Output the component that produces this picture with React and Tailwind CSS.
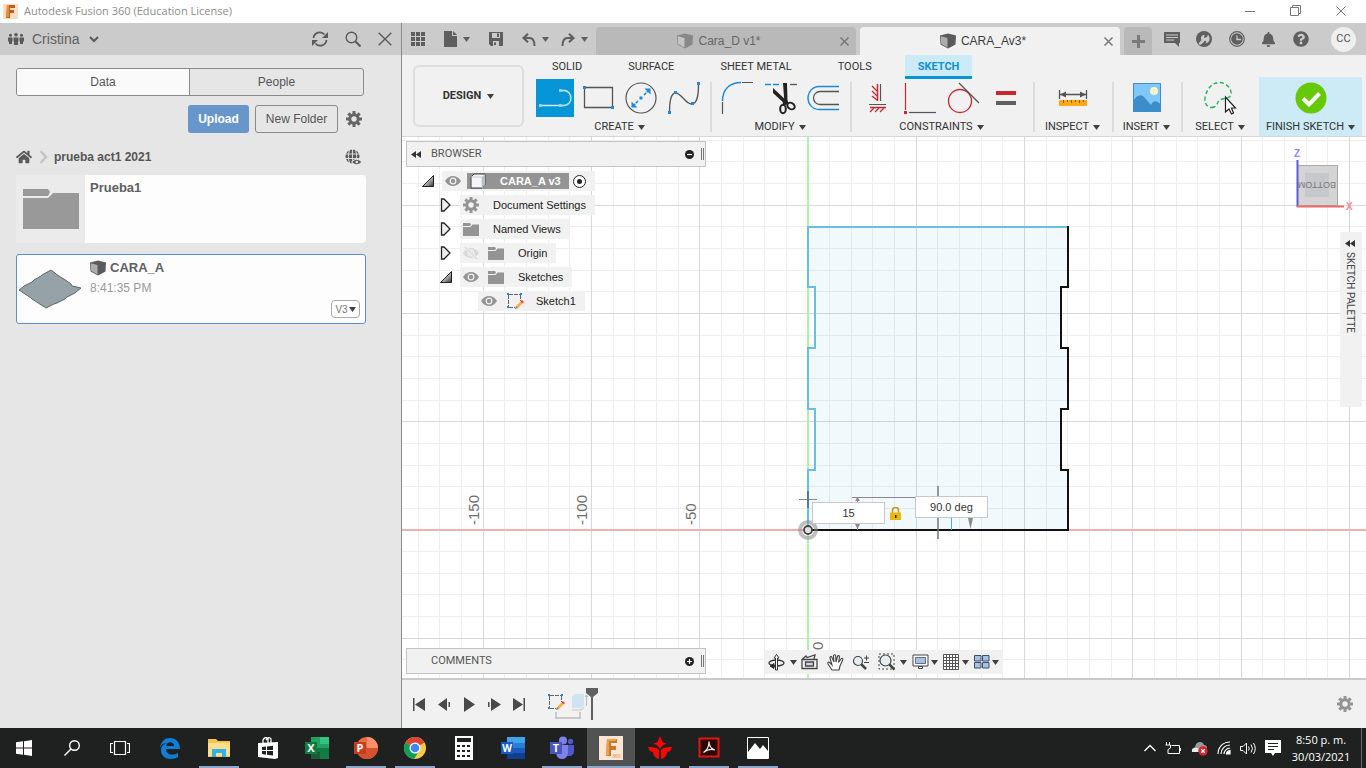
import { FaBell, FaQuestionCircle, FaHome } from 'react-icons/fa';

const BLUE = '#1a8ae0';

/* ---------- shared icons ---------- */

const Caret = ({ className = 'text-[#404040]' }) => (
  <svg width="7" height="5" viewBox="0 0 7 5" className={`shrink-0 ${className}`}>
    <path d="M0 0h7L3.5 5z" fill="currentColor" />
  </svg>
);

const Gear = ({ size = 16, className = 'text-[#666]' }) => (
  <svg width={size} height={size} viewBox="0 0 16 16" className={className}>
    <circle cx="8" cy="8" r="4.2" fill="none" stroke="currentColor" strokeWidth="3" />
    <g fill="currentColor">
      {[0, 45, 90, 135, 180, 225, 270, 315].map((a) => (
        <rect key={a} x="6.5" y="0" width="3" height="4" transform={`rotate(${a} 8 8)`} />
      ))}
    </g>
  </svg>
);

const Cube = ({ className = 'text-[#5a5a5a]' }) => (
  <svg width="16" height="16" viewBox="0 0 16 16" className={className}>
    <path d="M0 2.5 8 .5l8 2-.5 9L8 15.5l-7.5-4z" fill="currentColor" />
    <path d="M.8 3.2 7.5 5v9.5L1.2 11z" fill="#fff" fillOpacity=".5" />
  </svg>
);

const Close = ({ size = 10, className = 'text-[#777]', width = 1.6 }) => (
  <svg width={size} height={size} viewBox="0 0 10 10" className={className}>
    <path d="M.5.5l9 9M9.5.5l-9 9" stroke="currentColor" strokeWidth={width} />
  </svg>
);

const Eye = ({ off }) => (
  <svg width="16" height="12" viewBox="0 0 16 12" className={off ? 'text-[#d8d8d8]' : 'text-[#949494]'}>
    <path d="M0 6C2 2.500 5 1 8 1s6 1.500 8 5c-2 3.500-5 5-8 5S2 9.500 0 6z" fill="currentColor" />
    <circle cx="8" cy="6" r="2.800" fill="none" stroke="#f1f1f1" strokeWidth="1.200" />
    {off && <path d="M2 0l12 12" stroke="#f1f1f1" strokeWidth="3" />}
    {off && <path d="M2 0l12 12" stroke="#d8d8d8" strokeWidth="1.200" />}
  </svg>
);

const Folder = () => (
  <svg width="16" height="13" viewBox="0 0 16 13">
    <path d="M0 0h7l1 1.500L7 3H0z" fill="#949494" />
    <path d="M0 4h7.500L9.500 1.500H16V13H0z" fill="#949494" />
  </svg>
);

const SketchIcon = () => (
  <svg width="18" height="16" viewBox="0 0 18 16">
    <path d="M2.500 2v11M3 1.500h11M14.500 2v6M3 14.500h6" fill="none" stroke="#666" strokeDasharray="4 1" />
    <path d="M1 0h2v2H1zM14 0h2v2h-2zM1 13h2v2H1z" fill={BLUE} />
    <path d="M10 13l4.500-4.500 2 2L12 15z" fill="#fbb03b" />
    <path d="M14.500 8.500L16 7l2 2-1.500 1.500z" fill="#f0404a" />
    <path d="M10 13l2 2-3 1z" fill="#777" />
  </svg>
);

const BodyIcon = () => (
  <svg width="16" height="16" viewBox="0 0 16 16">
    <path d="M1 4l3-3h11v11l-3 3H1z" fill="#f4f5f8" stroke="#444" />
    <path d="M1 4h11v11" fill="none" stroke="#ccc" />
    <path d="M12 4l3-3v11l-3 3z" fill="#b9bdc6" />
  </svg>
);

const Expander = ({ open }) => (
  <svg width="12" height="14" viewBox="0 0 12 14" className="shrink-0">
    <defs>
      <linearGradient id="tri" x1="0" y1="0" x2="1" y2="1">
        <stop offset=".3" stopColor="#eee" />
        <stop offset="1" stopColor="#333" />
      </linearGradient>
    </defs>
    {open ? (
      <path d="M11.500 1.500v11H.500z" fill="url(#tri)" stroke="#222" />
    ) : (
      <path d="M1.500 1h2.500l6 6-6 6H1.500z" fill="#eee" stroke="#222" strokeWidth="1.300" />
    )}
  </svg>
);

const Rewind = () => (
  <svg width="10" height="7" viewBox="0 0 10 7">
    <path d="M5 0v7L0 3.500zM10 0v7L5 3.500z" fill="#333" />
  </svg>
);

/* ---------- data panel ---------- */

function DataPanel() {
  return (
    <aside className="w-[402px] shrink-0 border-r border-[#8a8a8a] bg-[#e6e6e6] text-[#555]">
      <header className="flex h-8 items-center bg-[#cbcbcb] pl-2 pr-[9px]">
        <button className="flex items-center gap-2 text-sm text-[#606060]">
          <svg width="16" height="12" viewBox="0 0 16 12" fill="#5a5a5a">
            <circle cx="8" cy="1.800" r="1.800" />
            <circle cx="2.500" cy="2.300" r="1.500" />
            <circle cx="13.500" cy="2.300" r="1.500" />
            <path d="M5.500 4.500h5v4H10V12H6V8.500h-.5zM0 4.500h4.500v4H4V11H1V8.500H0zM11.500 4.500H16v4h-1V11h-3V8.500h-.5z" />
          </svg>
          Cristina
          <svg width="10" height="7" viewBox="0 0 10 7" className="ml-[2px]">
            <path d="M1 1l4 4 4-4" fill="none" stroke="#5a5a5a" strokeWidth="2" />
          </svg>
        </button>
        <div className="ml-auto flex items-center gap-[17px]">
          <button aria-label="Refresh">
            <svg width="16" height="16" viewBox="0 0 16 16" fill="none" stroke="#5a5a5a" strokeWidth="1.800">
              <path d="M1.500 7A6.300 6.300 0 0 1 12.500 3.500M14.500 9A6.300 6.300 0 0 1 3.500 12.500" />
              <path d="M16 1v6h-6zM0 15V9h6z" fill="#5a5a5a" stroke="none" />
            </svg>
          </button>
          <button aria-label="Search">
            <svg width="16" height="16" viewBox="0 0 16 16" fill="none" stroke="#5a5a5a" strokeWidth="1.400">
              <circle cx="6.500" cy="6.500" r="5.300" />
              <path d="M10.500 10.500l5 5" strokeWidth="2" />
            </svg>
          </button>
          <button aria-label="Close panel">
            <Close size={14} className="text-[#5a5a5a]" width={1} />
          </button>
        </div>
      </header>

      <div className="px-4 pr-[35px] pt-[13px]">
        <div className="mr-[2px] grid h-7 grid-cols-2 overflow-hidden rounded-[3px] border border-[#8a8a8a] text-xs">
          <button className="border-r border-[#8a8a8a] bg-[#fafafa]">Data</button>
          <button>People</button>
        </div>

        <div className="mr-1 mt-[9px] flex items-center justify-end gap-[6px] text-xs">
          <button className="h-7 w-[61px] rounded-[3px] bg-[#6896ca] font-bold text-white">Upload</button>
          <button className="h-7 w-[83px] rounded-[3px] border border-[#8a8a8a]">New Folder</button>
          <button aria-label="Settings" className="ml-[2px]">
            <Gear />
          </button>
        </div>

        <nav className="mr-1 mt-3 flex h-6 items-center text-xs font-bold">
          <a href="#home" aria-label="Home" className="text-[#5a5a5a]">
            <FaHome size={16} />
          </a>
          <svg width="9" height="14" viewBox="0 0 9 14" className="ml-[7px] mr-[6px]">
            <path d="M1.500 1l5.500 6-5.500 6" fill="none" stroke="#c4c4c4" strokeWidth="2.500" />
          </svg>
          <a href="#project">prueba act1 2021</a>
          <button aria-label="Share" className="ml-auto">
            <svg width="17" height="17" viewBox="0 0 17 17">
              <circle cx="7.500" cy="7.500" r="7" fill="#5a5a5a" />
              <path d="M0 5h15M0 9.500h15M7.500 0v15M4.500 1C3 5 3 10 4.500 14M10.500 1c1.500 4 1.500 9 0 13" fill="none" stroke="#e6e6e6" strokeWidth=".9" />
              <path d="M6.500 13q5-5.500 10.500 0-5.500 5.500-10.500 0z" fill="#5a5a5a" stroke="#e6e6e6" />
              <circle cx="11.800" cy="13" r="1.300" fill="#e6e6e6" />
            </svg>
          </button>
        </nav>

        <article className="mt-[6px] flex h-[68px] rounded-sm bg-[#fdfdfd]">
          <div className="flex w-[69px] items-center justify-center bg-[#ebebeb]">
            <svg width="56" height="42" viewBox="0 0 56 42" fill="#999">
              <path d="M0 1h25l2 3-2 4H0zM0 10h25l5-5h26v36H0z" />
            </svg>
          </div>
          <h3 className="pl-[5px] pt-[3px] text-[13px] leading-5 font-bold text-[#606060]">Prueba1</h3>
        </article>

        <article className="mt-[11px] flex h-[70px] rounded-[3px] border border-[#5b8fce] bg-[#fdfdfd]">
          <svg width="66" height="68" viewBox="0 0 66 68" className="mr-[7px]">
            <path d="M2 35l4-3 1-1 8-4 2-2 7-4 1-1 9-5 4 3 1 1 6 4 2 1 7 5 1 2 9 2-5 4-1 1-8 4-2 2-8 4-3 1-8 4-14-9-1-1z" fill="#97a2a8" stroke="#5c686d" />
          </svg>
          <div className="flex-1 leading-5">
            <h3 className="flex items-center gap-1 pt-[3px] text-[13px] font-bold text-[#606060]">
              <Cube /> CARA_A
            </h3>
            <p className="text-xs leading-5 text-[#999]">8:41:35 PM</p>
          </div>
          <button className="mb-[5px] mr-[5px] flex h-[18px] w-[29px] items-center justify-center gap-[1px] self-end rounded-sm border border-[#aaa] text-[10px] text-[#777]">
            V3 <Caret />
          </button>
        </article>
      </div>
    </aside>
  );
}

/* ---------- application bar ---------- */

function DocumentTab({ title, active }) {
  return (
    <div
      className={`relative flex h-7 flex-1 items-center justify-center gap-[5px] rounded-t-sm pr-[14px] text-xs ${
        active ? 'bg-[#f1f1f1] text-[#3c3c3c]' : 'bg-[#b9b9b9] text-[#666]'
      }`}
    >
      <Cube className={active ? 'text-[#5a5a5a]' : 'text-[#888]'} />
      <span>{title}</span>
      <button aria-label={`Close ${title}`} className="absolute right-[7px]">
        <Close size={9} />
      </button>
    </div>
  );
}

function AppBar() {
  return (
    <div className="flex h-8 items-center bg-[#cbcbcb] text-[#5f5f5f]">
      <div className="flex w-[194px] shrink-0 items-center pl-[9px]">
        <button aria-label="Show data panel">
          <svg width="14" height="14" viewBox="0 0 14 14" fill="currentColor">
            {[0, 5, 10].map((y) => [0, 5, 10].map((x) => <rect key={`${x}-${y}`} x={x} y={y} width="4" height="4" />))}
          </svg>
        </button>
        <button aria-label="File" className="ml-[19px] flex items-center gap-[6px]">
          <svg width="13" height="16" viewBox="0 0 13 16" fill="currentColor">
            <path d="M0 0h8v5h5v11H0zM9 0l4 4H9z" />
          </svg>
          <Caret className="text-[#5f5f5f]" />
        </button>
        <button aria-label="Save" className="ml-[19px]">
          <svg width="14" height="14" viewBox="0 0 14 14">
            <path d="M0 0h14v14H2l-2-2z" fill="currentColor" />
            <path d="M3 1h8v5H3zM4 9h6v5H4z" fill="#cbcbcb" />
            <path d="M8 1.500h2V5H8zM5 10.500h2V13H5z" fill="currentColor" />
          </svg>
        </button>
        <button aria-label="Undo" className="ml-[19px] flex items-center gap-[6px]">
          <svg width="14" height="13" viewBox="0 0 14 13" fill="none" stroke="currentColor">
            <path d="M6 .8L1.500 5 6 9.200" strokeWidth="2.200" />
            <path d="M2 5h5.500c3.500 0 5 2.500 5 8" strokeWidth="2" />
          </svg>
          <Caret className="text-[#5f5f5f]" />
        </button>
        <button aria-label="Redo" className="ml-3 flex items-center gap-[6px]">
          <svg width="14" height="13" viewBox="0 0 14 13" fill="none" stroke="currentColor">
            <path d="M8 .8L12.500 5 8 9.200" strokeWidth="2.200" />
            <path d="M12 5H6.500c-3.500 0-5 2.500-5 8" strokeWidth="2" />
          </svg>
          <Caret className="text-[#5f5f5f]" />
        </button>
      </div>

      <div className="flex flex-1 gap-1 self-end">
        <DocumentTab title="Cara_D v1*" />
        <DocumentTab title="CARA_Av3*" active />
        <button aria-label="New tab" className="flex h-7 w-7 items-center justify-center rounded-t-sm bg-[#b9b9b9]">
          <svg width="13" height="13" viewBox="0 0 13 13">
            <path d="M5 0h3v5h5v3H8v5H5V8H0V5h5z" fill="#7a7a7a" />
          </svg>
        </button>
      </div>

      <div className="flex w-[214px] shrink-0 items-center justify-between pl-3 pr-[10px]">
        <button aria-label="Comments">
          <svg width="16" height="16" viewBox="0 0 16 16">
            <path d="M0 1h16v11h-1v4l-4-4H0z" fill="currentColor" />
            <path d="M2 4h12M2 6.500h12M2 9h8" stroke="#cbcbcb" />
          </svg>
        </button>
        <button aria-label="Extensions">
          <svg width="16" height="16" viewBox="0 0 16 16">
            <circle cx="8" cy="8" r="8" fill="currentColor" />
            <path d="M2.500 12.500L5.500 9C4 6 6 3.500 8.500 4L8 7l3-1 1-2.500c2.500 3 2 7-1 8.500-1.500.7-3 .5-4 0L4 14z" fill="#cbcbcb" />
            <path d="M6.500 12.500L9 9.500l1.500 1.500-2 2.500z" fill="currentColor" />
          </svg>
        </button>
        <button aria-label="Job status">
          <svg width="16" height="16" viewBox="0 0 16 16">
            <circle cx="8" cy="8" r="7.300" fill="none" stroke="currentColor" strokeWidth="1.200" />
            <circle cx="8" cy="8" r="5.800" fill="currentColor" />
            <path d="M8 4.500V8.500h4" fill="none" stroke="#cbcbcb" strokeWidth="1.300" />
          </svg>
        </button>
        <button aria-label="Notifications"><FaBell size={15} /></button>
        <button aria-label="Help"><FaQuestionCircle size={16} /></button>
        <button className="ml-[6px] h-[25px] w-[25px] rounded-full bg-[#efefef] font-[Roboto] text-[11px] text-[#555]">CC</button>
      </div>
    </div>
  );
}

/* ---------- ribbon ---------- */

const icons = {
  line: (
    <>
      <path d="M4 26.500h20M24 11.500h4a7 7.500 0 0 1 0 15h-2" fill="none" stroke="#d9ecf7" strokeWidth="1.300" />
      <path d="M3 25h3v3H3zM23 25h3v3h-3zM23 10h3v3h-3z" fill="#8fd0f5" />
    </>
  ),
  rect: (
    <>
      <path d="M5.500 8.500h28v20h-28z" fill="none" stroke="#555" strokeWidth="1.300" />
      <path d="M4 7h3v3H4zM32 27h3v3h-3z" fill={BLUE} />
    </>
  ),
  circle: (
    <>
      <circle cx="19" cy="19" r="15" fill="none" stroke="#555" strokeWidth="1.200" />
      <path d="M11 27l5-5M22 16l5-5" stroke={BLUE} strokeWidth="1.600" strokeDasharray="3 1" />
      <path d="M28.500 9.500v6l-6-6zM9.500 28.500v-6l6 6zM17.500 17.500h3v3h-3z" fill={BLUE} />
    </>
  ),
  spline: (
    <>
      <path d="M4.500 34c0-10 1-20 6-20 6 0 10 11 16 11 6 0 7-9 7-20" fill="none" stroke="#555" strokeWidth="1.300" />
      <path d="M3 32h3v3H3zM9 12h3v3H9zM26 23h3v3h-3zM32 3h3v3h-3z" fill={BLUE} />
    </>
  ),
  fillet: (
    <>
      <path d="M4.500 22C4.500 10 12 3.500 23 3.500" fill="none" stroke={BLUE} strokeWidth="1.400" />
      <path d="M4.500 23v12M24 3.500h11" stroke="#555" strokeWidth="1.200" />
    </>
  ),
  trim: (
    <>
      <path d="M4 5.500h16" stroke={BLUE} strokeWidth="1.300" strokeDasharray="6 2" />
      <path d="M29 5.500h7" stroke="#555" strokeWidth="1.300" />
      <path d="M22 4h4l.5 18-3 3z" fill="#222" />
      <path d="M12 9v5l13 12 2-3z" fill="#222" />
      <ellipse cx="22" cy="30" rx="2.800" ry="4.200" fill="none" stroke="#222" strokeWidth="2" />
      <ellipse cx="30" cy="27" rx="4" ry="3" fill="none" stroke="#222" strokeWidth="2" transform="rotate(35 30 27)" />
      <path d="M22 25l5-2" stroke="#222" strokeWidth="3" />
    </>
  ),
  offset: (
    <>
      <path d="M35 7.500H15a11 11.500 0 0 0 0 23h20" fill="none" stroke={BLUE} strokeWidth="1.400" />
      <path d="M35 12.500H16a6.500 6.500 0 0 0 0 13h19" fill="none" stroke="#555" strokeWidth="1.300" />
    </>
  ),
  fix: (
    <>
      <path d="M19.500 5v17M12 28.500h16" stroke="#c8272d" strokeWidth="1.500" />
      <path d="M22.500 5v17M11 25.500h17" stroke="#555" strokeWidth="1.200" />
      <path d="M14 7l5 5M14 12l5 5M14 17l5 4M12 33l4-4M17 33l4-4M22 33l4-4" stroke="#c8272d" strokeWidth="1.300" />
    </>
  ),
  perpendicular: (
    <>
      <path d="M4.500 4v27" stroke="#c8272d" strokeWidth="1.200" />
      <path d="M8 33.500h27" stroke="#555" strokeWidth="1.200" />
      <path d="M3 32h3v3H3z" fill="#c8272d" />
    </>
  ),
  tangent: (
    <>
      <circle cx="16" cy="22" r="11.500" fill="none" stroke="#c8272d" strokeWidth="1.300" />
      <path d="M15 4l20 20" stroke="#555" strokeWidth="1.300" />
    </>
  ),
  equal: (
    <>
      <path d="M9 12h20v4H9z" fill="#c8272d" />
      <path d="M9 22h20v4H9z" fill="#606060" />
    </>
  ),
  measure: (
    <>
      <path d="M5.500 11v9M32.500 11v9M6 15.500h26" stroke="#555" strokeWidth="1.300" />
      <path d="M6 15.500l6-3v6zM32 15.500l-6-3v6z" fill="#555" />
      <path d="M5 21h28v6H5z" fill="#fba919" />
      <path d="M9.500 21v3M13.500 21v2M17.500 21v3M21.500 21v2M25.500 21v3M29.500 21v2" stroke="#8a5a00" />
    </>
  ),
  image: (
    <>
      <path d="M5 4h28v29H5z" fill="#80c7fb" />
      <path d="M5 22c4-6 8-8 12-3l6 7c2-5 6-5 10 0v7H5z" fill="#3b8ecb" />
      <circle cx="26" cy="12" r="4" fill="#fdf3c4" />
      <path d="M5.500 4.500h27v28h-27z" fill="none" stroke="#3b8ecb" />
    </>
  ),
  select: (
    <>
      <path d="M13 28c-5 2-10-2-9-9C6 9 11 4 18 3.500c8 0 13 7 12 12-1 5-8 3-12 6-2 2-1 5-5 6.500z" fill="none" stroke="#2bb05a" strokeWidth="1.400" strokeDasharray="4 2.500" />
      <path d="M24.500 18v15l3.500-3 2.500 5 2-1-2-5h4z" fill="#fff" stroke="#222" strokeWidth="1.200" />
    </>
  ),
  check: (
    <>
      <circle cx="19" cy="19" r="15.500" fill="#66c905" />
      <path d="M11 19.500l6 6 10.500-11" fill="none" stroke="#fff" strokeWidth="4" />
    </>
  ),
};

const groups = [
  { label: 'CREATE', width: 'w-[173px] mr-1', tools: ['line', 'rect', 'circle', 'spline'] },
  { label: 'MODIFY', width: 'w-[140px]', tools: ['fillet', 'trim', 'offset'], divider: true },
  { label: 'CONSTRAINTS', width: 'w-[183px]', tools: ['fix', 'perpendicular', 'tangent', 'equal'], divider: true },
  { label: 'INSPECT', width: 'w-[79px]', tools: ['measure'], divider: true },
  { label: 'INSERT', width: 'w-[69px]', tools: ['image'], divider: true },
  { label: 'SELECT', width: 'w-[78px]', tools: ['select'], divider: true },
  { label: 'FINISH SKETCH', width: 'w-[103px]', tools: ['check'], finish: true },
];

function Ribbon() {
  return (
    <div className="flex h-[82px] border-b border-[#d6d6d6] bg-[#f1f1f1] pl-[11px] font-[Roboto] text-[11px] text-[#333]">
      <button className="mt-[10px] flex h-[62px] w-[111px] shrink-0 items-center justify-center gap-[6px] rounded-md border-2 border-[#dedede] font-bold">
        DESIGN <Caret />
      </button>
      <div className="ml-[9px] flex-1">
        <nav className="ml-[6px] flex h-6 gap-5">
          {['SOLID', 'SURFACE', 'SHEET METAL', 'TOOLS'].map((t) => (
            <button key={t} className="px-[13px]">{t}</button>
          ))}
          <button className="bg-[#cdeaf7] px-[13px] font-bold text-[#0b93d3] shadow-[inset_0_-3px_#0696d7]">SKETCH</button>
        </nav>
        <div className="flex">
          {groups.map((g) => (
            <div
              key={g.label}
              className={`relative flex h-[57px] shrink-0 flex-col items-center ${g.width} ${
                g.finish ? '-mt-[2px] h-[59px] bg-[#cdeaf7] pt-[2px]' : ''
              }`}
            >
              {g.divider && <span className="absolute left-0 top-[3px] h-[50px] w-[2px] bg-[#dcdcdc]" />}
              <div className="flex gap-[5px]">
                {g.tools.map((name) => (
                  <button key={name} aria-label={name} className={name === 'line' ? 'bg-[#0696d7]' : ''}>
                    <svg width="38" height="38" viewBox="0 0 38 38">{icons[name]}</svg>
                  </button>
                ))}
              </div>
              <button className="flex h-5 shrink-0 items-center gap-1 whitespace-nowrap">
                {g.label} <Caret />
              </button>
            </div>
          ))}
        </div>
      </div>
    </div>
  );
}

/* ---------- canvas ---------- */

// grid step in pixels for 10 mm; every fifth line is a major one
const STEP = 21.66;
const range = (from, to) => Array.from({ length: to - from + 1 }, (_, i) => from + i);
const at = (i) => Math.floor(i * STEP);

function SketchDrawing() {
  return (
    <svg className="absolute inset-0 h-full w-full" aria-hidden="true">
      <g transform="translate(406 393)">
        {[false, true].map((major) => (
          <g key={String(major)} fill={major ? '#d8d8d8' : '#eeeeee'}>
            {range(-18, 60).filter((i) => (i % 5 === 0) === major).map((i) => (
              <rect key={`v${i}`} x={at(i)} y="-400" width="1" height="1600" />
            ))}
            {range(-18, 40).filter((i) => (i % 5 === 0) === major).map((i) => (
              <rect key={`h${i}`} x="-410" y={at(i)} width="2400" height="1" />
            ))}
          </g>
        ))}
        <rect x="-1" y="-400" width="2" height="1600" fill="#aef0ae" />
        <rect x="-410" y="-1" width="2400" height="2" fill="#eeb0b0" />

        <path
          d="M0-303H260V-243h-7V-182h7V-121h-7V-60h7V0H0V-60H7V-121H0V-182H7V-243H0z"
          fill="#4fb4e8"
          fillOpacity=".08"
        />
        <path d="M0 0V-60H7V-121H0V-182H7V-243H0V-303H260" fill="none" stroke="#69bfe1" strokeWidth="2" />
        <path d="M0 0H260V-60h-7V-121h7V-182h-7V-243h7V-304" fill="none" stroke="#111" strokeWidth="2" />

        <path d="M44-32.500H110M49.500-32V0M-9-30.500H9" stroke="#8a8a8a" />
        <path d="M0-39V-22" stroke="#4f7f93" strokeWidth="2" />
        <path d="M130-44V9" stroke="#777" strokeWidth="1.500" />
        <path d="M143.500-12V0" stroke="#3db2e6" />
        <path d="M160-12h5l-2.500 11zM47-6h5l-2.500 5zM47-29h5l-2.500-4z" fill="#8a8a8a" />

        <circle r="8" fill="none" stroke="#8a8a8a" strokeOpacity=".55" strokeWidth="4" />
        <circle r="4" fill="#e0dfe8" stroke="#444" strokeWidth="1.800" />

        <g fill="#707070" fontFamily="Liberation Sans, sans-serif" fontSize="15">
          <text transform="translate(-329 -5) rotate(-90)">-150</text>
          <text transform="translate(-221 -5) rotate(-90)">-100</text>
          <text transform="translate(-112 -5) rotate(-90)">-50</text>
          <text transform="translate(15 120) rotate(-90)">0</text>
        </g>
      </g>
    </svg>
  );
}

function PanelBar({ title, minus }) {
  return (
    <div className="flex h-[26px] w-[300px] items-center border border-[#c4c4c4] bg-[#f1f1f1] pl-1 font-[Roboto] text-[11px] text-[#555]">
      <span className="w-5">{minus && <Rewind />}</span>
      {title}
      <button aria-label={`Toggle ${title}`} className="ml-auto mr-[7px]">
        <svg width="9" height="9" viewBox="0 0 9 9">
          <circle cx="4.500" cy="4.500" r="4.500" fill="#222" />
          <path d={minus ? 'M2 4.500h5' : 'M2 4.500h5M4.500 2v5'} stroke="#fff" strokeWidth="1.200" />
        </svg>
      </button>
      <span className="mr-[1px] h-3 w-[3px] border-x border-[#777]" />
    </div>
  );
}

function TreeRow({ indent, expander, children }) {
  return (
    <li className={`flex h-6 items-center gap-2 ${indent}`}>
      {expander && <Expander open={expander === 'open'} />}
      <div className="flex h-5 items-center gap-[9px] bg-[#f1f1f1] pl-[3px] pr-[9px]">{children}</div>
    </li>
  );
}

function Browser() {
  return (
    <section className="absolute left-1 top-1">
      <PanelBar title="BROWSER" minus />
      <ul className="mt-[2px] text-[11px] text-[#222]">
        <TreeRow indent="pl-4" expander="open">
          <Eye />
          <span className="-ml-[3px] flex h-4 w-[102px] items-center gap-[14px] bg-[#949494] pl-[3px] font-bold text-white">
            <BodyIcon /> CARA_A v3
          </span>
          <label className="-ml-[5px] flex h-[13px] w-[13px] items-center justify-center rounded-full border border-[#222] bg-white">
            <input type="radio" name="active" aria-label="Activate CARA_A v3" defaultChecked className="peer sr-only" />
            <span className="h-[5px] w-[5px] rounded-full peer-checked:bg-[#222]" />
          </label>
        </TreeRow>
        <TreeRow indent="pl-[34px]" expander="closed">
          <Gear className="text-[#949494]" />
          <span className="pl-[5px]">Document Settings</span>
        </TreeRow>
        <TreeRow indent="pl-[34px]" expander="closed">
          <Folder />
          <span className="pl-[5px]">Named Views</span>
        </TreeRow>
        <TreeRow indent="pl-[34px]" expander="closed">
          <Eye off />
          <Folder />
          <span className="pl-[5px]">Origin</span>
        </TreeRow>
        <TreeRow indent="pl-[34px]" expander="open">
          <Eye />
          <Folder />
          <span className="pl-[5px]">Sketches</span>
        </TreeRow>
        <TreeRow indent="pl-[72px]">
          <Eye />
          <SketchIcon />
          <span className="pl-[3px]">Sketch1</span>
        </TreeRow>
      </ul>
    </section>
  );
}

function ViewCube() {
  return (
    <svg width="68" height="72" viewBox="0 0 68 72" className="absolute right-2 top-2" fontFamily="Liberation Sans, sans-serif">
      <rect x="7.500" y="20.500" width="40" height="40" fill="#cfcfcf" fillOpacity=".9" stroke="#aaa" />
      <rect x="15" y="28" width="24" height="24" fill="#c6c8cb" />
      <text transform="translate(46 37) rotate(180)" fontSize="9" fill="#777a80">BOTTOM</text>
      <path d="M7.500 15v47" stroke="#5a5ad6" strokeWidth="2" />
      <path d="M7 61.500h47" stroke="#f06a6a" strokeWidth="2" />
      <text x="4" y="12" fontSize="10" fontWeight="bold" fill="#8a8af5">Z</text>
      <text x="56" y="65" fontSize="10" fontWeight="bold" fill="#f58a8a">X</text>
    </svg>
  );
}

function NavBar() {
  return (
    <div className="absolute bottom-1 left-1/2 flex h-6 w-[238px] -translate-x-1/2 items-center bg-[#f1f1f1] px-[3px]">
      <button aria-label="Orbit" className="flex items-center gap-[5px]">
        <svg width="17" height="17" viewBox="0 0 17 17" fill="none" stroke="#333">
          <ellipse cx="8.500" cy="9" rx="7.500" ry="3" strokeWidth="1.300" />
          <path d="M7.500 16V4H6l2.500-3.500L11 4H9.500v12z" fill="#fff" />
          <path d="M6 9.500v5L2 12z" fill="#222" />
          <path d="M5 12h3" strokeWidth="1.500" />
        </svg>
        <Caret />
      </button>
      <button aria-label="Look at" className="ml-1">
        <svg width="17" height="16" viewBox="0 0 17 16" fill="none" stroke="#444" strokeWidth="1.300">
          <path d="M1 5.500h15v9H1zM1 5.500L5 2l1 1.500L14 1l-1 4" fill="#f6f6f6" />
          <path d="M4.500 8h8v4h-8z" fill="#cdd5e3" />
        </svg>
      </button>
      <button aria-label="Pan" className="ml-[9px]">
        <svg width="17" height="17" viewBox="0 0 17 17">
          <path d="M5 16l-4-6c-1-2 1-2.500 2-1l2 2L3 4c-.3-1.500 1.500-2 2-.5L7 8 6.500 2c0-1.700 2-1.700 2.200 0L9 8l1.500-5.500c.4-1.500 2.200-1 2 .5L11.500 8.500 14 5c1-1.200 2.300-.3 1.700 1L13 12l-1 4z" fill="#fff" stroke="#444" strokeWidth="1.100" />
        </svg>
      </button>
      <button aria-label="Zoom" className="ml-2">
        <svg width="18" height="17" viewBox="0 0 18 17" fill="none" stroke="#444">
          <circle cx="6" cy="7" r="4.500" fill="#e4eef2" strokeWidth="1.200" />
          <path d="M9 10l5 5" strokeWidth="2.500" />
          <path d="M12 4h5M14.500 1.500v5M12 8.500h5" />
        </svg>
      </button>
      <button aria-label="Zoom window" className="ml-2 flex items-center gap-[5px]">
        <svg width="17" height="18" viewBox="0 0 17 18" fill="none" stroke="#444">
          <path d="M1 1h15v15H1z" strokeDasharray="2 2" />
          <circle cx="7.500" cy="7.500" r="5.500" fill="#e4eef2" strokeWidth="1.200" />
          <path d="M11.500 11.500l5 5" strokeWidth="2.500" />
        </svg>
        <Caret />
      </button>
      <button aria-label="Display settings" className="ml-[5px] flex items-center gap-[2px]">
        <svg width="17" height="16" viewBox="0 0 17 16">
          <path d="M1 1h15v11H1z" fill="#fff" stroke="#444" />
          <path d="M3.500 3.500h10v6h-10z" fill="#a9c0e0" stroke="#5a6e96" />
          <path d="M6.500 12.500h4v2h-4z" fill="#fff" stroke="#444" />
        </svg>
        <Caret />
      </button>
      <button aria-label="Grid and snaps" className="ml-[5px] flex items-center gap-[2px]">
        <svg width="17" height="17" viewBox="0 0 17 17" fill="#fff" stroke="#555">
          <path d="M.5.5h15v15H.5zM3.500.5v15M6.500.5v15M9.500.5v15M12.500.5v15M.5 3.500h15M.5 6.500h15M.5 9.500h15M.5 12.500h15" />
        </svg>
        <Caret />
      </button>
      <button aria-label="Viewports" className="ml-[5px] flex items-center gap-[2px]">
        <svg width="16" height="14" viewBox="0 0 16 14" fill="#a9c0e0" stroke="#3f4f6b">
          <path d="M.5.5h6.500v5.500H.5zM8.500.5H15v5.500H8.500zM.5 7.500h6.500V13H.5zM8.500 7.500H15V13H8.500z" />
        </svg>
        <Caret />
      </button>
    </div>
  );
}

function Canvas() {
  return (
    <main className="relative flex-1 overflow-hidden bg-white">
      <SketchDrawing />
      <input
        aria-label="Length"
        defaultValue="15"
        className="absolute left-[410px] top-[365px] h-[22px] w-[73px] border border-[#c8c8c8] bg-white text-center text-[11px] text-[#333]"
      />
      <svg width="11" height="13" viewBox="0 0 11 13" className="absolute left-[488px] top-[370px]">
        <path d="M2.500 6V3.500a3 3 0 0 1 6 0V6" fill="none" stroke="#c79a10" strokeWidth="1.600" />
        <path d="M0 5.500h11V13H0z" fill="#e8b90a" />
        <path d="M5 8h1.500v3H5z" fill="#222" />
      </svg>
      <input
        aria-label="Angle"
        defaultValue="90.0 deg"
        className="absolute left-[513px] top-[359px] h-[22px] w-[73px] border border-[#c8c8c8] bg-white text-center text-[11px] text-[#333]"
      />
      <Browser />
      <ViewCube />
      <button className="absolute right-1 top-[95px] flex h-[175px] w-[22px] flex-col items-center gap-[5px] bg-[#f1f1f1] pr-[2px] pt-2 font-[Roboto] text-[10px] text-[#444]">
        <Rewind />
        <span className="leading-3 [writing-mode:vertical-rl]">SKETCH PALETTE</span>
      </button>
      <div className="absolute bottom-1 left-1">
        <PanelBar title="COMMENTS" />
      </div>
      <NavBar />
    </main>
  );
}

function Timeline() {
  return (
    <div className="flex h-[50px] items-center border-t-2 border-[#cacaca] bg-[#f1f1f1] pl-[11px] pr-[13px] text-[#4a4a4a]">
      <div className="flex items-center gap-[11px]">
        {[
          ['First', 'M0 1h1.500v13H0zM12 1v13L2 7.500z'],
          ['Previous', 'M9 1v13L0 7.500zM10.500 5H12v5h-1.500z'],
          ['Play', 'M1 0v15l11-7.500z'],
          ['Next', 'M0 5h1.500v5H0zM3 1v13l10-6.500z'],
          ['Last', 'M0 1v13l10-6.500zM10.500 1H12v13h-1.500z'],
        ].map(([name, d]) => (
          <button key={name} aria-label={name}>
            <svg width="14" height="15" viewBox="0 0 14 15"><path d={d} fill="currentColor" /></svg>
          </button>
        ))}
      </div>
      <div className="relative ml-5">
        <svg width="54" height="34" viewBox="0 0 54 34">
          <path d="M25 10l3-3h9v11l-3 3H25z" fill="#cfe3f1" />
          <path d="M25 23h9l3-3" fill="none" stroke="#d4d4d4" strokeWidth="1.500" />
          <path d="M39.500 19V8M38 10l1.500-2L41 10" fill="none" stroke="#bbb" />
          <path d="M9 25v6h24v-6" fill="none" stroke="#c8c8c8" strokeWidth="2" />
          <path d="M39 1h12v5l-5 4v23h-2V10l-5-4z" fill="#606060" />
        </svg>
        <span className="absolute left-0 top-[7px]">
          <SketchIcon />
        </span>
      </div>
      <button aria-label="Timeline settings" className="ml-auto">
        <Gear className="text-[#949494]" />
      </button>
    </div>
  );
}

/* ---------- windows taskbar ---------- */

const apps = [
  {
    name: 'Edge',
    icon: <path d="M2 12C3 5 7 2 12 2c6 0 10 4 10 11H8c0 6 7 7 12 4v4c-7 4-17 2-17-7 0-4 3-6 6-7-5 0-6 3-7 5zm6-2h8c0-5-7-5-8 0z" fill="#0e7fd8" />,
  },
  {
    name: 'File Explorer',
    open: true,
    icon: (
      <>
        <path d="M1 3h8l2 2h12v16H1z" fill="#f3c64b" />
        <path d="M1 7h22v13H1z" fill="#fbdf8b" />
        <path d="M5 13h14v8h-4v-4H9v4H5z" fill="#2cb5ea" />
      </>
    ),
  },
  {
    name: 'Store',
    icon: (
      <>
        <path d="M2 7l20-1v16l-3 1L2 21z" fill="#fff" />
        <path d="M7 8V4q2-4 5-1v5M10 4q3-4 5-1v4" fill="none" stroke="#fff" strokeWidth="1.300" />
        <path d="M6 11l4-.5v3.500H6zM11 10.400l6-.6V14h-6zM6 15h4v3.700L6 18zM11 15h6v4.500l-6-.7z" fill="#1e2120" />
      </>
    ),
  },
  {
    name: 'Excel',
    icon: (
      <>
        <path d="M6 1h18v22H6z" fill="#21a366" />
        <path d="M15 1h9v7h-9z" fill="#33c481" />
        <path d="M6 12h18v11H6z" fill="#107c41" />
        <path d="M6 16h9v7H6z" fill="#185c37" />
        <rect y="6" width="12" height="12" fill="#107c41" />
        <text x="6" y="16" textAnchor="middle" fontSize="11" fontWeight="bold" fill="#fff">X</text>
      </>
    ),
  },
  {
    name: 'PowerPoint',
    open: true,
    icon: (
      <>
        <circle cx="13" cy="12" r="11" fill="#ed6c47" />
        <path d="M13 1a11 11 0 0 1 11 11H13z" fill="#ff8f6b" />
        <path d="M2 12h22a11 11 0 0 1-22 0z" fill="#d35230" />
        <rect y="6" width="12" height="12" fill="#c43e1c" />
        <text x="6" y="16" textAnchor="middle" fontSize="11" fontWeight="bold" fill="#fff">P</text>
      </>
    ),
  },
  {
    name: 'Chrome',
    open: true,
    icon: (
      <>
        <circle cx="12" cy="12" r="11" fill="#fbc94a" />
        <path d="M12 12L2.500 6.500a11 11 0 0 1 19 0z" fill="#db4437" />
        <path d="M12 12L2.500 6.500A11 11 0 0 0 11 23l5-8z" fill="#0f9d58" />
        <circle cx="12" cy="12" r="5.500" fill="#fff" />
        <circle cx="12" cy="12" r="4.300" fill="#4285f4" />
      </>
    ),
  },
  {
    name: 'Calculator',
    icon: (
      <>
        <path d="M3 0h18v24H3z" fill="#fff" />
        <path d="M5 2h14v4H5zM5 9h3v2H5zM10 9h3v2h-3zM15 9h3v2h-3zM5 14h3v2H5zM10 14h3v2h-3zM15 14h3v2h-3zM5 19h3v2H5zM10 19h3v2h-3zM15 19h3v2h-3z" fill="#1e2120" />
      </>
    ),
  },
  {
    name: 'Word',
    icon: (
      <>
        <path d="M6 1h18v22H6z" fill="#2b7cd3" />
        <path d="M6 1h18v6H6z" fill="#41a5ee" />
        <path d="M6 12h18v6H6z" fill="#185abd" />
        <path d="M6 17h18v6H6z" fill="#103f91" />
        <rect y="6" width="12" height="12" fill="#185abd" />
        <text x="6" y="16" textAnchor="middle" fontSize="10" fontWeight="bold" fill="#fff">W</text>
      </>
    ),
  },
  {
    name: 'Teams',
    open: true,
    icon: (
      <>
        <circle cx="20.500" cy="5.500" r="2.700" fill="#5059c9" />
        <circle cx="13" cy="4.500" r="4" fill="#7b83eb" />
        <path d="M16 9h8v6q0 5-5 5h-3z" fill="#5059c9" />
        <path d="M7 9h11v8q-1 6-6 6t-6-6z" fill="#7b83eb" />
        <rect y="6" width="12" height="12" fill="#4b53bc" />
        <text x="6" y="16" textAnchor="middle" fontSize="11" fontWeight="bold" fill="#fff">T</text>
      </>
    ),
  },
  {
    name: 'Fusion 360',
    open: true,
    active: true,
    icon: (
      <>
        <path d="M0 0h24v24H0z" fill="#fbe6d6" />
        <path d="M8 3h10v4h-6v3h5v4h-5v6H7z" fill="#c77a2b" />
        <path d="M8 3h10l-2 2h-6v14l-3 1z" fill="#eba454" />
        <text x="13" y="22" fontSize="5" fill="#e8791f">360</text>
      </>
    ),
  },
  {
    name: 'Engraver',
    open: true,
    icon: (
      <path
        d="M12 0l2.500 6 4 1.500-4 2L12 13 9.500 9.500l-4-2 4-1.500zM0 11c4 0 9 0 11 3v9c-4-1-6-4-6-7-3 0-4-2-5-5zM24 11c-4 0-9 0-11 3v9c4-1 6-4 6-7 3 0 4-2 5-5z"
        fill="#fb0606"
      />
    ),
  },
  {
    name: 'Acrobat',
    open: true,
    icon: (
      <>
        <path d="M2.500 2.500h19v18h-19z" fill="#2a0606" stroke="#e2170d" strokeWidth="2" />
        <path d="M6.500 16.500c3-2 5.500-6 5.500-11 0 5 2.500 7.500 6 8.500-3.500-1-8-.5-11.500 2.500z" fill="none" stroke="#eee" strokeWidth="1.200" />
      </>
    ),
  },
  {
    name: 'Photos',
    open: true,
    icon: (
      <>
        <path d="M1.500 1.500h21v21h-21z" fill="#1e2120" stroke="#fff" />
        <path d="M2 16l7-9 5 6 3-4 5 6v7H2z" fill="#fff" />
      </>
    ),
  },
];

function Taskbar() {
  return (
    <footer className="flex h-10 bg-[#1e2120] text-white">
      <button aria-label="Start" className="flex w-12 items-center justify-center">
        <svg width="16" height="16" viewBox="0 0 16 16" fill="#fff">
          <path d="M0 2.300L7 1.300V7.500H0zM8 1.200L16 0v7.500H8zM0 8.500h7v6.200L0 13.700zM8 8.500h8V16l-8-1.200z" />
        </svg>
      </button>
      <button aria-label="Search Windows" className="flex w-12 items-center justify-center">
        <svg width="16" height="16" viewBox="0 0 16 16" fill="none" stroke="#fff" strokeWidth="1.400">
          <circle cx="10.500" cy="5.500" r="4.800" />
          <path d="M7 9l-6.500 6.500" />
        </svg>
      </button>
      <button aria-label="Task view" className="mr-[2px] flex w-12 items-center justify-center">
        <svg width="20" height="14" viewBox="0 0 20 14" fill="none" stroke="#fff" strokeWidth="1.200">
          <path d="M4.500.5h11v13h-11zM3 2.500H.500v9H3M17 2.500h2.500v9H17" />
        </svg>
      </button>
      <div className="flex gap-[1px]">
        {apps.map((a) => (
          <button
            key={a.name}
            aria-label={a.name}
            className={`relative flex w-12 items-center justify-center ${a.active ? 'bg-[#505352]' : ''}`}
          >
            <svg width="24" height="24" viewBox="0 0 24 24" fontFamily="Open Sans, sans-serif">{a.icon}</svg>
            {a.open && (
              <span className={`absolute bottom-0 h-[2px] bg-[#8fa6cc] ${a.active ? 'inset-x-0' : 'inset-x-1'}`} />
            )}
          </button>
        ))}
      </div>

      <div className="ml-auto flex items-center gap-[9px]">
        <button aria-label="Show hidden icons">
          <svg width="12" height="8" viewBox="0 0 12 8"><path d="M.5 7L6 1.500 11.500 7" fill="none" stroke="#fff" strokeWidth="1.300" /></svg>
        </button>
        <svg width="17" height="13" viewBox="0 0 17 13" fill="none" stroke="#fff">
          <path d="M6.500 3.500h8v8H6M15.500 6v3M1.500 0v3M4.500 0v3M.5 3h5v3L3 7.500v4h3" />
        </svg>
        <svg width="17" height="15" viewBox="0 0 17 15">
          <path d="M4 6q1-5 5-5 3 0 4 3 3 0 3 3L8 11H2q-3-3 2-5z" fill="#9a9a9a" />
          <path d="M1 11q-1-4 4-4 2-1 4 4z" fill="#eee" />
          <circle cx="12" cy="10" r="4.700" fill="#e0202b" />
          <path d="M10.300 8.300l3.400 3.400M13.700 8.300l-3.400 3.400" stroke="#fff" strokeWidth="1.300" />
        </svg>
        <svg width="14" height="14" viewBox="0 0 14 14" fill="none" stroke="#fff" strokeWidth="1.200">
          <path d="M1 13C1 6 6 1 13 1M4 13c0-5 4-9 9-9M7 13c0-3 3-6 6-6" />
          <path d="M9.500 13q0-3 3.500-3.500V13z" fill="#fff" />
        </svg>
        <svg width="16" height="13" viewBox="0 0 16 13" fill="none" stroke="#fff">
          <path d="M.5 4.500H3L6.500 1v11L3 8.500H.5zM8.500 4.500q1.500 2 0 4M11 2.500q3 4 0 8M13.500 1q3.500 5.500 0 11" />
        </svg>
        <button aria-label="Action center">
          <svg width="16" height="16" viewBox="0 0 16 16">
            <path d="M0 0h16v13h-6l-2 3-2-3H0z" fill="#fff" />
            <path d="M3 3.500h10M3 6.500h10M3 9.500h6" stroke="#1e2120" />
          </svg>
        </button>
        <button className="w-[62px] text-center font-['Open_Sans'] text-[11px] leading-[17px] whitespace-nowrap">
          8:50 p. m.
          <br />
          30/03/2021
        </button>
        <span className="mr-1 h-10 w-px bg-[#6a6c6b]" />
      </div>
    </footer>
  );
}

export default function App() {
  return (
    <div className="flex min-h-screen flex-col overflow-hidden font-['Liberation_Sans',sans-serif]">
      <header className="flex h-[23px] items-center bg-white pl-[3px] font-['Open_Sans'] text-[11px] text-[#8c8c8c]">
        <svg width="15" height="15" viewBox="0 0 15 15" className="mr-[6px]">
          <path d="M0 0h15v15H0z" fill="#fbdcc4" />
          <path d="M4 1h8v3H7v2h4v3H7v5H3z" fill="#b9601a" />
          <path d="M4 1h2v12H3z" fill="#ef8d3a" />
        </svg>
        <h1>Autodesk Fusion 360 (Education License)</h1>
        <div className="ml-auto mr-5 flex items-center gap-[35px] pb-[2px]">
          <button aria-label="Minimize">
            <svg width="10" height="10" viewBox="0 0 10 10"><path d="M0 5.500h10" stroke="#777" /></svg>
          </button>
          <button aria-label="Restore">
            <svg width="11" height="11" viewBox="0 0 11 11" fill="none" stroke="#777">
              <path d="M.5 2.500h8v8h-8zM2.500 2.500v-2h8v8h-2" />
            </svg>
          </button>
          <button aria-label="Close"><Close width={1} /></button>
        </div>
      </header>

      <div className="flex flex-1">
        <DataPanel />
        <div className="flex min-w-0 flex-1 flex-col">
          <AppBar />
          <Ribbon />
          <Canvas />
          <Timeline />
        </div>
      </div>

      <Taskbar />
    </div>
  );
}
